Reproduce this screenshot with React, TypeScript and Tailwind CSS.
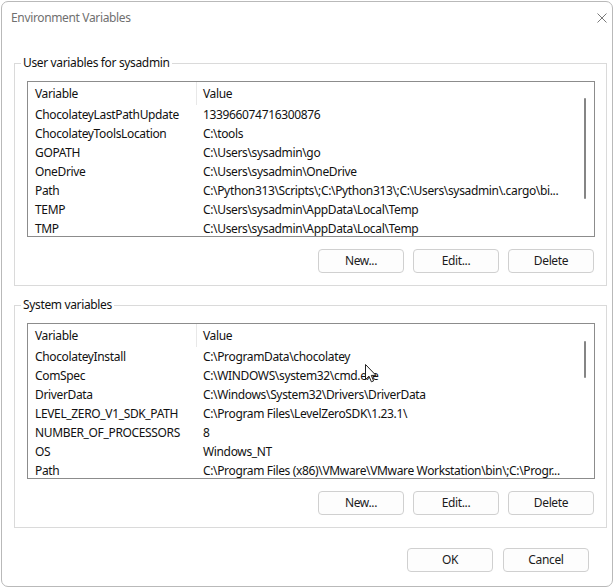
import React from "react";

type Row = [string, string];

const userRows: Row[] = [
  ["ChocolateyLastPathUpdate", "133966074716300876"],
  ["ChocolateyToolsLocation", "C:\\tools"],
  ["GOPATH", "C:\\Users\\sysadmin\\go"],
  ["OneDrive", "C:\\Users\\sysadmin\\OneDrive"],
  ["Path", "C:\\Python313\\Scripts\\;C:\\Python313\\;C:\\Users\\sysadmin\\.cargo\\bi..."],
  ["TEMP", "C:\\Users\\sysadmin\\AppData\\Local\\Temp"],
  ["TMP", "C:\\Users\\sysadmin\\AppData\\Local\\Temp"],
];

const sysRows: Row[] = [
  ["ChocolateyInstall", "C:\\ProgramData\\chocolatey"],
  ["ComSpec", "C:\\WINDOWS\\system32\\cmd.exe"],
  ["DriverData", "C:\\Windows\\System32\\Drivers\\DriverData"],
  ["LEVEL_ZERO_V1_SDK_PATH", "C:\\Program Files\\LevelZeroSDK\\1.23.1\\"],
  ["NUMBER_OF_PROCESSORS", "8"],
  ["OS", "Windows_NT"],
  ["Path", "C:\\Program Files (x86)\\VMware\\VMware Workstation\\bin\\;C:\\Progr..."],
];

function ListView({ rows, thumbTop, thumbH }: { rows: Row[]; thumbTop: number; thumbH: number }) {
  return (
    <div className="h-[156px] mr-[11px] border border-[#8c8c8c] bg-white flex overflow-hidden">
      <div className="flex-1 min-w-0 flex flex-col">
        <div className="h-[23px] shrink-0 grid grid-cols-[169px_1fr]">
          <div className="pl-[7px] flex items-center border-r border-[#e8e8e8]">Variable</div>
          <div className="pl-[6px] flex items-center">Value</div>
        </div>
        {rows.map(([k, v]) => (
          <div key={k} className="h-[19px] shrink-0 grid grid-cols-[169px_1fr] items-center">
            <div className="pl-[7px] whitespace-nowrap overflow-hidden">{k}</div>
            <div className="pl-[6px] whitespace-nowrap overflow-hidden">{v}</div>
          </div>
        ))}
      </div>
      <div className="w-[17px] shrink-0 flex flex-col">
        <div className="ml-[7px] w-[2px] rounded-full bg-[#858585]" style={{ marginTop: thumbTop, height: thumbH }} />
      </div>
    </div>
  );
}

function Btn({ children }: { children: React.ReactNode }) {
  return (
    <button className="w-[86px] h-[24px] rounded-[4px] border border-[#d0d0d0] bg-[#fdfdfd] text-[12px] text-[#1b1b1b] leading-none">
      {children}
    </button>
  );
}

function Group({ title, rows, thumbTop, thumbH, className }: { title: string; rows: Row[]; thumbTop: number; thumbH: number; className: string }) {
  return (
    <fieldset className={`ml-[12px] w-[593px] border border-[#dadada] pl-[12px] pt-[10px] pb-[12px] ${className}`}>
      <legend className="ml-[-6px] px-[2px] h-[16px] leading-[16px]">{title}</legend>
      <ListView rows={rows} thumbTop={thumbTop} thumbH={thumbH} />
      <div className="mt-[12px] mr-[12px] flex justify-end gap-[9px]">
        <Btn>New...</Btn>
        <Btn>Edit...</Btn>
        <Btn>Delete</Btn>
      </div>
    </fieldset>
  );
}

export default function App() {
  return (
    <div className="w-[616px] h-[588px] bg-white pt-[1px] pl-[1px] relative font-['Noto_Sans',sans-serif] text-[12px] tracking-[-0.35px] text-[#111]">
      <div className="w-[612px] h-[586px] border border-[#b9b9b9] rounded-[7px] bg-white flex flex-col">
        <div className="h-[31px] flex items-center justify-between pl-[9px] pr-[5px]">
          <span className="text-[#707070]">Environment Variables</span>
          <svg width="10" height="10" viewBox="0 0 10 10" className="mt-[1px]">
            <path d="M0.5 0.5 L9.5 9.5 M9.5 0.5 L0.5 9.5" stroke="#7a7a7a" strokeWidth="1" fill="none" />
          </svg>
        </div>
        <Group title="User variables for sysadmin" rows={userRows} thumbTop={16} thumbH={101} className="mt-[22px]" />
        <Group title="System variables" rows={sysRows} thumbTop={17} thumbH={37} className="mt-[11px]" />
        <div className="mt-[20px] pr-[23px] flex justify-end gap-[10px]">
          <Btn>OK</Btn>
          <Btn>Cancel</Btn>
        </div>
      </div>
      <svg className="absolute left-[365px] top-[364px]" width="12" height="19" viewBox="0 0 12 19">
        <path d="M0.5 0.5 L0.5 15.5 L4 12.2 L6.4 17.8 L8.6 16.9 L6.3 11.4 L11 11.4 Z" fill="#fff" stroke="#222" strokeWidth="1" strokeLinejoin="round" />
      </svg>
    </div>
  );
}
